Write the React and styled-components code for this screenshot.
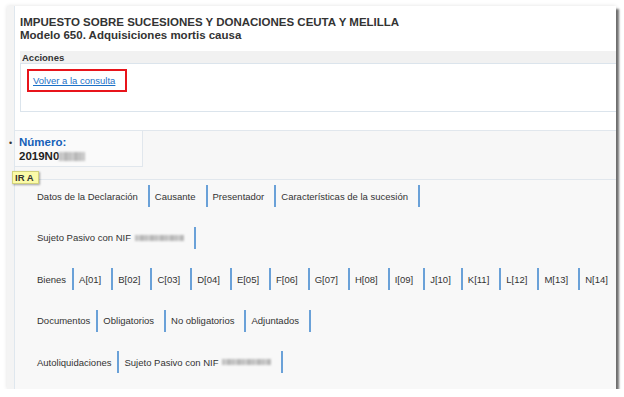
import React from "react";
import styled, { createGlobalStyle } from "styled-components";

const Global = createGlobalStyle`
  html, body { margin: 0; padding: 0; background: #ffffff; }
  body { font-family: "Liberation Sans", Arial, sans-serif; color: #333; }
`;

const Frame = styled.div`
  margin: 6px 0 0 7px;
  width: 609px;
  height: 383px;
  background: #f4f4f4;
  box-shadow: 3px 3px 2px rgba(0, 0, 0, 0.55), 0 0 4px rgba(0, 0, 0, 0.12);
  padding-left: 7px;
  box-sizing: border-box;
  display: flex;
  overflow: hidden;
`;

const Page = styled.div`
  flex: 1;
  border-left: 1px solid #dfe7ee;
  background: #f7f7f7;
  display: flex;
  flex-direction: column;
`;

const Header = styled.div`
  background: #ffffff;
  padding: 10px 0 18px 5px;
  border-bottom: 1px solid #e1e7ed;
`;

const Title = styled.h1`
  margin: 0;
  font-size: 11.5px;
  line-height: 13px;
  font-weight: bold;
  color: #333;
`;

const Panel = styled.div`
  margin-top: 9px;
`;

const PanelHeader = styled.div`
  height: 12px;
  line-height: 13px;
  background: #f1f1f1;
  font-size: 9.5px;
  font-weight: bold;
  color: #333;
  padding-left: 2px;
`;

const PanelBody = styled.div`
  height: 49px;
  box-sizing: border-box;
  border: 1px solid #dbe4ec;
  background: #fff;
  padding: 5px 0 0 6px;
`;

const Highlight = styled.div`
  display: inline-flex;
  align-items: center;
  height: 23px;
  box-sizing: border-box;
  border: 2px solid #e8141b;
  padding: 0 10px 0 4px;
`;

const Link = styled.a`
  font-size: 9.5px;
  color: #1a70c6;
  text-decoration: underline;
  cursor: pointer;
`;

const Lower = styled.div`
  display: flex;
  flex-direction: column;
  flex: 1;
`;

const NumeroBox = styled.div`
  position: relative;
  width: 128px;
  height: 36px;
  box-sizing: border-box;
  padding: 4px 0 0 4px;
  background: #fafafa;
  border-right: 1px solid #e1e7ed;
  border-bottom: 1px solid #e1e7ed;
`;

const Bullet = styled.span`
  position: absolute;
  left: -6px;
  top: 5px;
  font-size: 9px;
  line-height: 14px;
  color: #333;
`;

const NumeroLabel = styled.div`
  font-size: 11.5px;
  line-height: 14px;
  font-weight: bold;
  color: #1560b8;
`;

const NumeroValue = styled.div`
  font-size: 11.5px;
  line-height: 14px;
  font-weight: bold;
  color: #222;
  display: flex;
  align-items: center;
`;

const Blur = styled.span`
  display: inline-block;
  width: ${(p) => p.$w}px;
  height: ${(p) => p.$h}px;
  margin-left: ${(p) => p.$ml || 0}px;
  background: repeating-linear-gradient(
    90deg,
    #b9b9b9 0px,
    #d0d0d0 4px,
    #aeaeae 7px,
    #cfcfcf 10px
  );
  filter: blur(0.8px);
`;

const BadgeRow = styled.div`
  height: 12px;
  position: relative;
  z-index: 2;
`;

const Badge = styled.span`
  display: inline-flex;
  align-items: center;
  margin: 1px 0 0 -3px;
  height: 11px;
  padding: 0 4px 0 2px;
  background: #fbfba8;
  border: 1px solid #d2d27c;
  box-shadow: 1px 1px 2px rgba(0, 0, 0, 0.35);
  font-size: 9.5px;
  font-weight: bold;
  color: #333;
`;

const Nav = styled.div`
  flex: 1;
  border-top: 1px solid #e1e7ed;
  background: #f8f8f8;
  padding: 5px 0 0 22px;
  display: flex;
  flex-direction: column;
  gap: 19.5px;
`;

const NavRow = styled.div`
  display: flex;
  align-items: center;
`;

const NavItem = styled.span`
  display: inline-flex;
  align-items: center;
  height: 22px;
  font-size: 9.5px;
  color: #333;
  white-space: nowrap;
  padding: 0 ${(p) => (p.$label ? 6 : 10)}px 0 ${(p) => (p.$first ? 0 : 5)}px;
  border-right: 2px solid #6aa1d8;
`;

const rows = [
  [
    { t: "Datos de la Declaración" },
    { t: "Causante" },
    { t: "Presentador" },
    { t: "Características de la sucesión" },
  ],
  [{ t: "Sujeto Pasivo con NIF", nif: true, pr: 9 }],
  [
    { t: "Bienes", label: true },
    ...["A[01]", "B[02]", "C[03]", "D[04]", "E[05]", "F[06]", "G[07]", "H[08]", "I[09]", "J[10]", "K[11]", "L[12]", "M[13]", "N[14]"].map(
      (t) => ({ t })
    ),
  ],
  [
    { t: "Documentos", label: true },
    { t: "Obligatorios" },
    { t: "No obligatorios" },
    { t: "Adjuntados" },
  ],
  [
    { t: "Autoliquidaciones", label: true },
    { t: "Sujeto Pasivo con NIF", nif: true },
  ],
];

export default function App() {
  return (
    <>
      <Global />
      <Frame>
        <Page>
          <Header>
            <Title>
              IMPUESTO SOBRE SUCESIONES Y DONACIONES CEUTA Y MELILLA
              <br />
              Modelo 650. Adquisiciones mortis causa
            </Title>
            <Panel>
              <PanelHeader>Acciones</PanelHeader>
              <PanelBody>
                <Highlight>
                  <Link>Volver a la consulta</Link>
                </Highlight>
              </PanelBody>
            </Panel>
          </Header>
          <Lower>
            <NumeroBox>
              <Bullet>•</Bullet>
              <NumeroLabel>Número:</NumeroLabel>
              <NumeroValue>
                2019N0
                <Blur $w={26} $h={9} />
              </NumeroValue>
            </NumeroBox>
            <BadgeRow>
              <Badge>IR A</Badge>
            </BadgeRow>
            <Nav>
              {rows.map((row, i) => (
                <NavRow key={i}>
                  {row.map((it, j) => (
                    <NavItem key={j} $first={j === 0} $label={it.label}>
                      {it.t}
                      {it.nif && <Blur $w={49} $h={6} $ml={4} />}
                    </NavItem>
                  ))}
                </NavRow>
              ))}
            </Nav>
          </Lower>
        </Page>
      </Frame>
    </>
  );
}
